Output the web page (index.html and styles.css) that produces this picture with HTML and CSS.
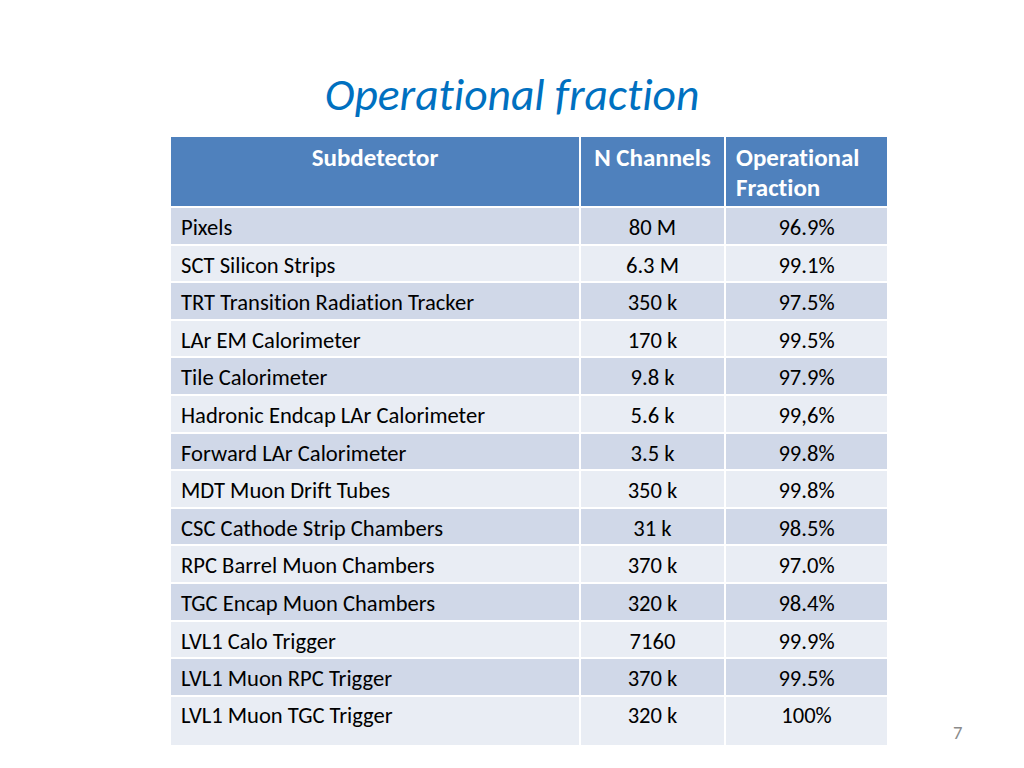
FILE: index.html
```html
<!DOCTYPE html>
<html>
<head>
<meta charset="utf-8">
<link rel="stylesheet" href="styles.css">
</head>
<body>
<div class="slide">
  <h1 class="title">Operational fraction</h1>
  <table class="ops">
    <colgroup>
      <col class="c1"><col class="c2"><col class="c3">
    </colgroup>
    <thead>
      <tr>
        <th class="center">Subdetector</th>
        <th class="center">N Channels</th>
        <th class="left">Operational Fraction</th>
      </tr>
    </thead>
    <tbody>
      <tr><td>Pixels</td><td>80 M</td><td>96.9%</td></tr>
      <tr><td>SCT Silicon Strips</td><td>6.3 M</td><td>99.1%</td></tr>
      <tr><td>TRT Transition Radiation Tracker</td><td>350 k</td><td>97.5%</td></tr>
      <tr><td>LAr EM Calorimeter</td><td>170 k</td><td>99.5%</td></tr>
      <tr><td>Tile Calorimeter</td><td>9.8 k</td><td>97.9%</td></tr>
      <tr><td>Hadronic Endcap LAr Calorimeter</td><td>5.6 k</td><td>99,6%</td></tr>
      <tr><td>Forward LAr Calorimeter</td><td>3.5 k</td><td>99.8%</td></tr>
      <tr><td>MDT Muon Drift Tubes</td><td>350 k</td><td>99.8%</td></tr>
      <tr><td>CSC Cathode Strip Chambers</td><td>31 k</td><td>98.5%</td></tr>
      <tr><td>RPC Barrel Muon Chambers</td><td>370 k</td><td>97.0%</td></tr>
      <tr><td>TGC Encap Muon Chambers</td><td>320 k</td><td>98.4%</td></tr>
      <tr><td>LVL1 Calo Trigger</td><td>7160</td><td>99.9%</td></tr>
      <tr><td>LVL1 Muon RPC Trigger</td><td>370 k</td><td>99.5%</td></tr>
      <tr class="last"><td>LVL1 Muon TGC Trigger</td><td>320 k</td><td>100%</td></tr>
    </tbody>
  </table>
  <div class="pagenum">7</div>
</div>
</body>
</html>
```
FILE: styles.css
```css
html, body {
  margin: 0;
  padding: 0;
  background: #ffffff;
}
.slide {
  position: relative;
  width: 1024px;
  height: 768px;
  box-sizing: border-box;
  padding-top: 71px;
  font-family: Carlito, Calibri, "Open Sans", sans-serif;
  font-variant-ligatures: none;
}
.title {
  margin: 0;
  text-align: center;
  font-weight: normal;
  font-style: italic;
  font-size: 45.5px;
  line-height: 48px;
  color: #0070c0;
}
.ops {
  margin: 18px 0 0 171px;
  width: 716px;
  border-collapse: collapse;
  table-layout: fixed;
  font-size: 22.6px;
}
.c1 { width: 409px; }
.c2 { width: 145px; }
.c3 { width: 162px; }
.ops th, .ops td {
  border: 2px solid #ffffff;
  vertical-align: top;
  box-sizing: border-box;
}
.ops tr > :first-child { border-left: none; }
.ops tr > :last-child { border-right: none; }
.ops thead tr > * { border-top: none; }
.ops tbody tr:last-child > * { border-bottom: none; }
.ops th {
  background: #4f81bd;
  color: #ffffff;
  font-weight: bold;
  font-size: 25px;
  height: 70px;
  line-height: 30px;
  padding: 6px 10px 0 10px;
}
.ops th.center { text-align: center; }
.ops th.left { text-align: left; }
.ops td {
  height: 37.6px;
  line-height: 24px;
  padding: 7px 10px 0 10px;
  color: #000000;
  text-align: center;
}
.ops td:first-child { text-align: left; }
.ops tbody tr:nth-child(odd) td { background: #d0d8e8; }
.ops tbody tr:nth-child(even) td { background: #e9edf4; }
.ops tr.last td { height: 49px; padding-top: 6px; }
.pagenum {
  position: absolute;
  left: 953px;
  top: 721px;
  font-size: 18.7px;
  color: #8b8b8b;
}
```
